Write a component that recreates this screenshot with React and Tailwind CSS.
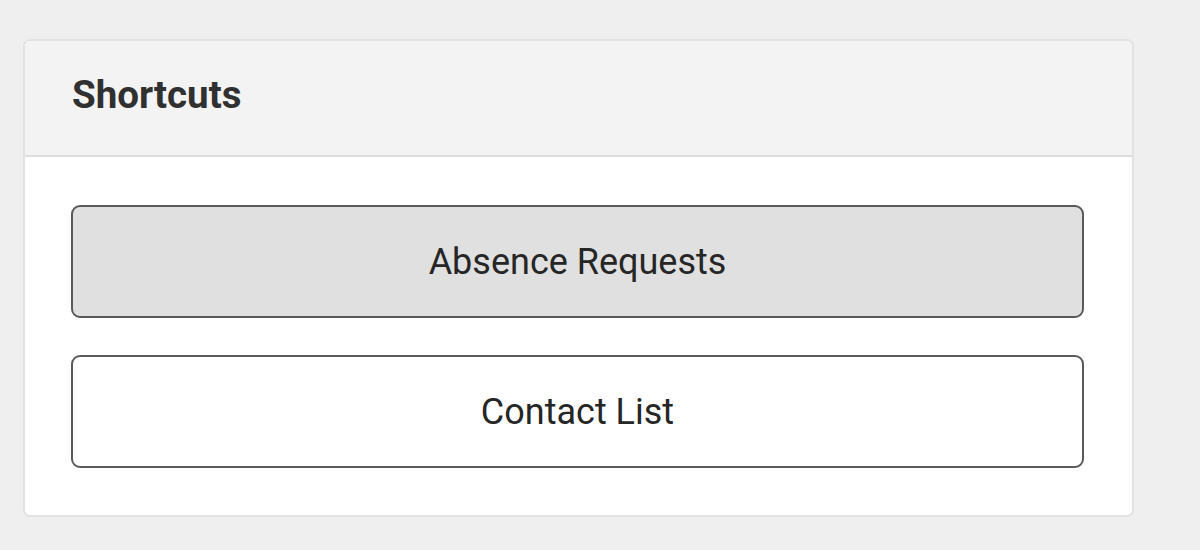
import React from 'react';

const shortcuts = [
  { id: 'absence', label: 'Absence Requests', active: true },
  { id: 'contacts', label: 'Contact List', active: false },
];

export default function App() {
  return (
    <div className="min-h-[550px] w-[1200px] bg-[#efefef] pt-[39px] pl-[23px] font-['Roboto',sans-serif]">
      <div className="w-[1111px] overflow-hidden rounded-[7px] border-2 border-[#e2e2e2] bg-white">
        <div className="flex h-[116px] items-center border-b-2 border-[#dddddd] bg-[#f3f3f3] px-[47px]">
          <h2 className="mb-[6px] text-[38.5px] font-bold leading-none text-[#303030]">Shortcuts</h2>
        </div>
        <div className="flex flex-col gap-[37px] pt-[48px] pb-[47px] pl-[46px] pr-[48px]">
          {shortcuts.map((item) => (
            <button
              key={item.id}
              className={`flex h-[113px] items-center justify-center rounded-[9px] border-2 border-[#5a5a5a] text-[36px] text-[#262626] ${
                item.active ? 'bg-[#e0e0e0]' : 'bg-white'
              }`}
            >
              {item.label}
            </button>
          ))}
        </div>
      </div>
    </div>
  );
}
